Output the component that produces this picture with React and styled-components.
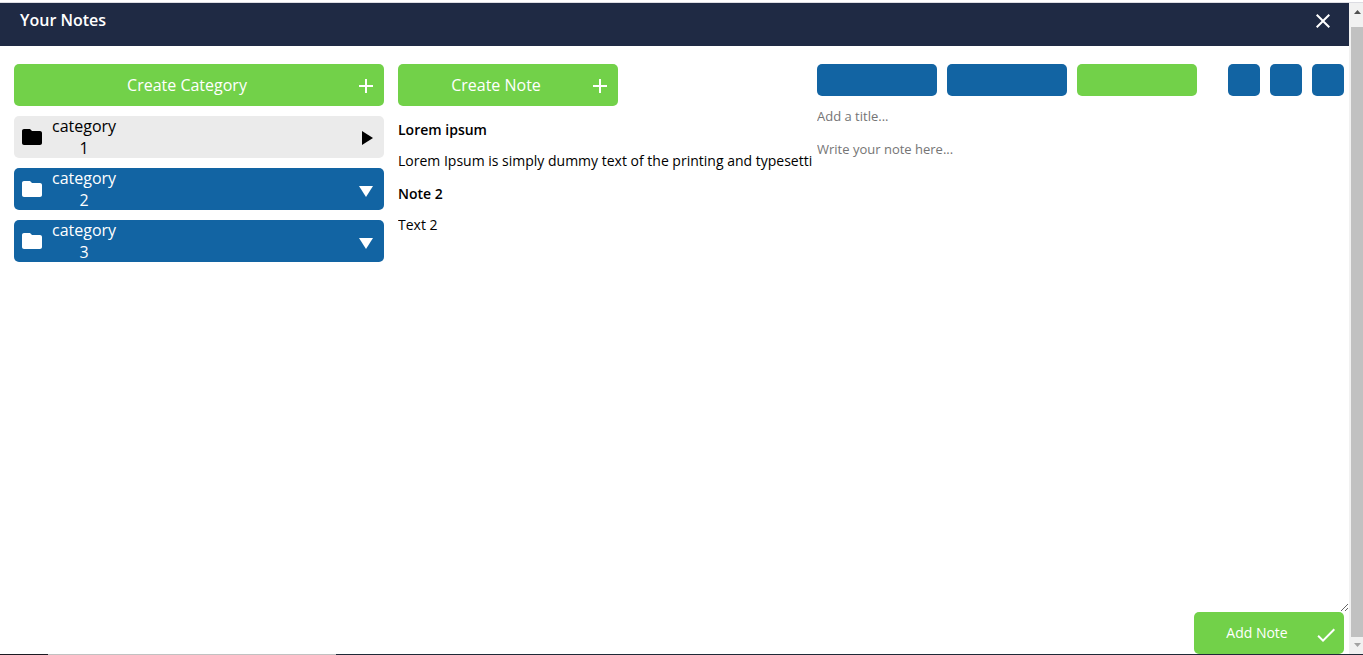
import React from "react";
import styled, { createGlobalStyle } from "styled-components";

const GREEN = "#72d149";
const BLUE = "#1264a3";
const NAVY = "#1f2a44";

const GlobalStyle = createGlobalStyle`
  * { box-sizing: border-box; }
  body {
    margin: 0;
    background: #fff;
    color: #000;
    font-family: "Open Sans", "Noto Sans", sans-serif;
    font-size: 14px;
    line-height: 20px;
  }
  button, input, textarea { font-family: inherit; }
`;

const Shell = styled.div`
  display: flex;
  flex-direction: column;
  height: 100vh;
`;

const TopEdge = styled.div`
  flex: none;
  height: 3px;
  border-bottom: 1px solid #dcdce2;
`;

const Frame = styled.div`
  display: flex;
  flex: 1;
  min-height: 0;
`;

const Panel = styled.main`
  display: flex;
  flex-direction: column;
  flex: 1;
  min-width: 0;
`;

const Header = styled.header`
  display: flex;
  justify-content: space-between;
  align-items: flex-start;
  padding: 6px 14px 13px 20px;
  background: ${NAVY};
  color: #fff;
`;

const Title = styled.h1`
  margin: 0;
  font-size: 16px;
  font-weight: 600;
  line-height: 22px;
`;

const CloseButton = styled.button`
  display: flex;
  padding: 0;
  border: 0;
  background: none;
  color: inherit;
  cursor: pointer;
`;

const Columns = styled.div`
  display: flex;
  flex: 1;
  min-height: 0;
  padding: 18px 0 0 14px;
`;

const Categories = styled.nav`
  display: flex;
  flex-direction: column;
  flex: none;
  gap: 10px;
  width: 370px;
  margin-right: 14px;
`;

const Notes = styled.section`
  flex: none;
  width: 414px;
  margin-right: 5px;
  overflow: hidden;
`;

const NoteList = styled.div`
  display: flex;
  flex-direction: column;
  gap: 13px;
  margin-top: 14px;
`;

const Editor = styled.form`
  display: flex;
  flex-direction: column;
  flex: 1;
  min-width: 0;
`;

const ActionButton = styled.button`
  display: flex;
  align-items: center;
  flex: none;
  width: ${(p) => p.$width || "100%"};
  height: 42px;
  padding: 0 6px;
  border: 0;
  border-radius: 5px;
  background: ${GREEN};
  color: #fff;
  font-size: ${(p) => (p.$small ? "14px" : "16px")};
  line-height: 22px;
  cursor: pointer;
`;

const ActionLabel = styled.span`
  flex: 1;
  text-align: center;
`;

const CategoryButton = styled.button`
  display: flex;
  align-items: center;
  justify-content: space-between;
  flex: none;
  height: 42px;
  padding: 0 6px;
  border: 0;
  border-radius: 5px;
  background: ${(p) => (p.$open ? "#ebebeb" : BLUE)};
  color: ${(p) => (p.$open ? "#000" : "#fff")};
  font-size: 16px;
  line-height: 22px;
  cursor: pointer;
`;

const CategoryName = styled.span`
  display: flex;
  align-items: center;
  gap: 8px;
`;

const CategoryText = styled.span`
  width: 64px;
  text-align: center;
`;

const NoteTitle = styled.h2`
  margin: 0 0 11px;
  font-size: 14px;
  font-weight: 600;
  line-height: 20px;
`;

const NoteText = styled.p`
  margin: 0;
  overflow: hidden;
  white-space: nowrap;
`;

const Toolbar = styled.div`
  display: flex;
  justify-content: space-between;
  padding-right: 5px;
`;

const ToolGroup = styled.div`
  display: flex;
  gap: 10px;
`;

const ToolButton = styled.button`
  width: ${(p) => (p.$wide ? "120px" : "32px")};
  height: 32px;
  padding: 0;
  border: 0;
  border-radius: 5px;
  background: ${(p) => (p.$green ? GREEN : BLUE)};
  cursor: pointer;
`;

const TitleInput = styled.input`
  height: 20px;
  margin: 10px 0 12px;
  padding: 0;
  border: 0;
  outline: 0;
  font-size: 13px;
  &::placeholder { color: #757575; }
`;

const NoteInput = styled.textarea`
  flex: 1;
  min-height: 0;
  padding: 2px 0;
  border: 0;
  outline: 0;
  font-size: 13px;
  line-height: 18px;
  resize: both;
  &::placeholder { color: #757575; }
`;

const Submit = styled.div`
  display: flex;
  justify-content: flex-end;
  padding-right: 5px;
`;

const ScrollTrack = styled.div`
  display: flex;
  flex-direction: column;
  align-items: flex-end;
  flex: none;
  width: 14px;
  background: #f1f1f1;
`;

const ScrollThumb = styled.div`
  flex: 1;
  width: 12px;
  background: #c1c1c1;
`;

const ScrollArrow = styled.svg`
  flex: none;
  width: 12px;
  height: ${(p) => p.$height}px;
`;

const BottomEdge = styled.div`
  display: flex;
  flex: none;
  height: 1px;
  background: #1f2937;
`;

const BottomPiece = styled.div`
  width: ${(p) => p.$width}px;
  background: ${(p) => p.$color};
`;

const Icon = ({ d }) => (
  <svg width="24" height="24" viewBox="0 0 24 24" fill="currentColor" aria-hidden="true">
    <path d={d} />
  </svg>
);

const PLUS = "M11 6h2v6h6v2h-6v6h-2v-6H5v-2h6z";
const CLOSE = "M19 6.41 17.59 5 12 10.59 6.41 5 5 6.41 10.59 12 5 17.59 6.41 19 12 13.41 17.59 19 19 17.59 13.41 12z";
const FOLDER = "M10 4H4c-1.1 0-1.99.9-1.99 2L2 18c0 1.1.9 2 2 2h16c1.1 0 2-.9 2-2V8c0-1.1-.9-2-2-2h-8l-2-2z";
const RIGHT = "M8 6v14l11-7z";
const DOWN = "M5 9h14l-7 11z";
const CHECK = "M9 18.17 4.83 14l-1.42 1.41L9 21 21 9l-1.41-1.41z";

const categories = [
  { name: "category 1", open: true },
  { name: "category 2" },
  { name: "category 3" },
];

const notes = [
  { title: "Lorem ipsum", text: "Lorem Ipsum is simply dummy text of the printing and typesetti" },
  { title: "Note 2", text: "Text 2" },
];

export default function App() {
  return (
    <Shell>
      <GlobalStyle />
      <TopEdge />
      <Frame>
        <Panel>
          <Header>
            <Title>Your Notes</Title>
            <CloseButton aria-label="Close"><Icon d={CLOSE} /></CloseButton>
          </Header>
          <Columns>
            <Categories>
              <ActionButton>
                <ActionLabel>Create Category</ActionLabel>
                <Icon d={PLUS} />
              </ActionButton>
              {categories.map((c) => (
                <CategoryButton key={c.name} $open={c.open} aria-expanded={!!c.open}>
                  <CategoryName>
                    <Icon d={FOLDER} />
                    <CategoryText>{c.name}</CategoryText>
                  </CategoryName>
                  <Icon d={c.open ? RIGHT : DOWN} />
                </CategoryButton>
              ))}
            </Categories>
            <Notes>
              <ActionButton $width="220px">
                <ActionLabel>Create Note</ActionLabel>
                <Icon d={PLUS} />
              </ActionButton>
              <NoteList>
                {notes.map((n) => (
                  <article key={n.title}>
                    <NoteTitle>{n.title}</NoteTitle>
                    <NoteText>{n.text}</NoteText>
                  </article>
                ))}
              </NoteList>
            </Notes>
            <Editor onSubmit={(e) => e.preventDefault()}>
              <Toolbar>
                <ToolGroup>
                  <ToolButton type="button" $wide aria-label="Edit" />
                  <ToolButton type="button" $wide aria-label="Move" />
                  <ToolButton type="button" $wide $green aria-label="Save" />
                </ToolGroup>
                <ToolGroup>
                  <ToolButton type="button" aria-label="Bold" />
                  <ToolButton type="button" aria-label="Italic" />
                  <ToolButton type="button" aria-label="Underline" />
                </ToolGroup>
              </Toolbar>
              <TitleInput aria-label="Title" placeholder="Add a title..." />
              <NoteInput aria-label="Note" placeholder="Write your note here..." />
              <Submit>
                <ActionButton $width="150px" $small>
                  <ActionLabel>Add Note</ActionLabel>
                  <Icon d={CHECK} />
                </ActionButton>
              </Submit>
            </Editor>
          </Columns>
        </Panel>
        <ScrollTrack aria-hidden="true">
          <ScrollArrow $height={24} viewBox="0 0 12 24"><path d="M3 11h7L6.5 7z" fill="#505050" /></ScrollArrow>
          <ScrollThumb />
          <ScrollArrow $height={17} viewBox="0 0 12 17"><path d="M3 6h7L6.5 10z" fill="#a3a3a3" /></ScrollArrow>
        </ScrollTrack>
      </Frame>
      <BottomEdge>
        <BottomPiece $width={48} $color="#1b1a22" />
        <BottomPiece $width={288} $color="#c1c1c1" />
      </BottomEdge>
    </Shell>
  );
}
